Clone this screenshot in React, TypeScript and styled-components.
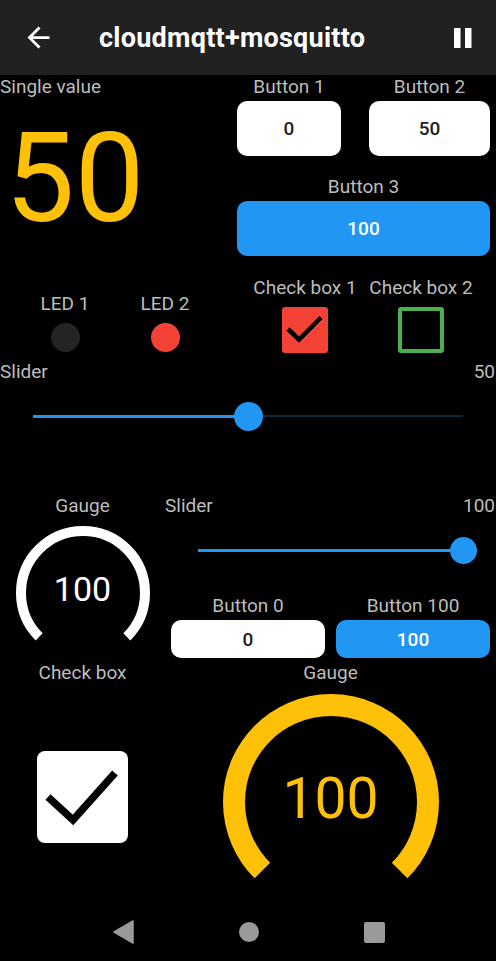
import React from 'react'
import styled, { createGlobalStyle } from 'styled-components'

const GlobalStyle = createGlobalStyle`
  html, body {
    margin: 0;
    padding: 0;
    background: #000;
    font-family: Roboto, "Noto Sans", "Liberation Sans", sans-serif;
  }
  * { box-sizing: border-box; }
`

const BLUE = '#2196F3'
const YELLOW = '#FFC107'
const RED = '#F44336'
const GREEN = '#4CAF50'

export default function App() {
  return <Screen>
    <GlobalStyle />
    <AppBar>
      <BackIcon viewBox="0 0 24 24">
        <path d="M20 11H7.83l5.59-5.59L12 4l-8 8 8 8 1.41-1.41L7.83 13H20v-2z" fill="#fff" />
      </BackIcon>
      <Title>cloudmqtt+mosquitto</Title>
      <PauseIcon viewBox="0 0 18 20">
        <rect x="0" y="0" width="6.5" height="20" fill="#fff" />
        <rect x="11" y="0" width="6.5" height="20" fill="#fff" />
      </PauseIcon>
    </AppBar>

    <Dashboard>
      <TopSection>
        <SingleValue>
          <Label>Single value</Label>
          <BigNumber>50</BigNumber>
        </SingleValue>
        <ButtonGrid>
          <Cell>
            <Label>Button 1</Label>
            <PanelButton $h={55}>0</PanelButton>
          </Cell>
          <Cell>
            <Label>Button 2</Label>
            <PanelButton $h={55}>50</PanelButton>
          </Cell>
          <Cell $wide>
            <Label>Button 3</Label>
            <PanelButton $h={55} $primary>100</PanelButton>
          </Cell>
        </ButtonGrid>
      </TopSection>

      <IndicatorRow>
        <Indicator $w={100} $ml={15}>
          <Label>LED 1</Label>
          <Led $color="#242424" />
        </Indicator>
        <Indicator $w={100}>
          <Label>LED 2</Label>
          <Led $color={RED} />
        </Indicator>
        <Indicator $w={110} $ml={35}>
          <Label>Check box 1</Label>
          <SmallCheck $checked>
            <svg width="46" height="46" viewBox="0 0 46 46">
              <path d="M6 22 L17 32.5 L39 10.5" stroke="#000" strokeWidth="4.5" fill="none" />
            </svg>
          </SmallCheck>
        </Indicator>
        <Indicator $w={110} $ml={6}>
          <Label>Check box 2</Label>
          <SmallCheck />
        </Indicator>
      </IndicatorRow>

      <SliderBlock>
        <SliderHeader>
          <Label>Slider</Label>
          <Label>50</Label>
        </SliderHeader>
        <Slider value={0.5} h={30} thumb={29} />
      </SliderBlock>

      <MiddleRow>
        <GaugeCell>
          <Label>Gauge</Label>
          <Gauge size={134} stroke={10} color="#fff" fontSize={34} valueTop={46} gap={10} />
        </GaugeCell>
        <RightPanel>
          <SliderHeader>
            <Label>Slider</Label>
            <Label>100</Label>
          </SliderHeader>
          <Slider value={1} h={28} thumb={27} top={20} />
          <PairGrid>
            <Cell>
              <Label>Button 0</Label>
              <PanelButton $h={38}>0</PanelButton>
            </Cell>
            <Cell>
              <Label>Button 100</Label>
              <PanelButton $h={38} $primary>100</PanelButton>
            </Cell>
          </PairGrid>
        </RightPanel>
      </MiddleRow>

      <BottomRow>
        <GaugeCell>
          <Label>Check box</Label>
          <BigCheck>
            <svg width="91" height="92" viewBox="0 0 91 92">
              <path d="M11 46 L36 69 L78 22" stroke="#000" strokeWidth="7.5" fill="none" />
            </svg>
          </BigCheck>
        </GaugeCell>
        <GaugeCell>
          <Label>Gauge</Label>
          <Gauge size={216} stroke={22} color={YELLOW} fontSize={57} valueTop={76} gap={11} crop={188} />
        </GaugeCell>
      </BottomRow>
    </Dashboard>

    <NavBar>
      <svg width="21" height="24" viewBox="0 0 21 24">
        <polygon points="20,1 1,12 20,23" fill="#9a9a9a" stroke="#9a9a9a" strokeWidth="1.5" strokeLinejoin="round" />
      </svg>
      <NavHome />
      <NavRecent />
    </NavBar>
  </Screen>
}

interface SliderProps {
  value: number
  h: number
  thumb: number
  top?: number
}
function Slider({ value, h, thumb, top = 19 }: SliderProps) {
  return <SliderTrackArea $h={h} $top={top}>
    <TrackRest />
    <TrackFill style={{ width: `${value * 100}%` }} />
    <Thumb $size={thumb} style={{ left: `${value * 100}%` }} />
  </SliderTrackArea>
}

interface GaugeProps {
  size: number
  stroke: number
  color: string
  fontSize: number
  valueTop: number
  gap: number
  crop?: number
}
function Gauge({ size, stroke, color, fontSize, valueTop, gap, crop }: GaugeProps) {
  const c = size / 2
  const r = (size - stroke) / 2
  const d = r * Math.SQRT1_2
  const path = `M ${c - d} ${c + d} A ${r} ${r} 0 1 1 ${c + d} ${c + d}`
  const h = crop || size
  return <GaugeStack $gap={gap}>
    <svg width={size} height={h} viewBox={`0 0 ${size} ${h}`}>
      <path d={path} stroke={color} strokeWidth={stroke} fill="none" />
    </svg>
    <GaugeValue $color={color} $size={fontSize} $top={valueTop}>100</GaugeValue>
  </GaugeStack>
}

const Screen = styled.div`
  min-height: 961px;
  display: flex;
  flex-direction: column;
  background: #000;
`
const AppBar = styled.header`
  height: 75px;
  flex: none;
  background: #212121;
  display: flex;
  align-items: center;
  padding: 0 24px 0 22px;
`
const BackIcon = styled.svg`
  width: 33px;
  height: 33px;
  flex: none;
`
const Title = styled.h1`
  margin: 0 0 0 44px;
  flex: 1;
  color: #fff;
  font-size: 27px;
  font-weight: 700;
  letter-spacing: 0.25px;
`
const PauseIcon = styled.svg`
  width: 18px;
  height: 20px;
  flex: none;
`
const Dashboard = styled.main`
  display: flex;
  flex-direction: column;
`
const Label = styled.div`
  color: #bdbdbd;
  font-size: 19px;
  line-height: 20px;
  white-space: nowrap;
`
const TopSection = styled.section`
  display: grid;
  grid-template-columns: 237px 253px;
  padding-top: 2px;
`
const SingleValue = styled.div`
  display: flex;
  flex-direction: column;
`
const BigNumber = styled.div`
  margin-top: 20px;
  padding-left: 5px;
  color: ${YELLOW};
  font-size: 124px;
  line-height: 1;
`
const ButtonGrid = styled.div`
  display: grid;
  grid-template-columns: 104px 121px;
  column-gap: 28px;
  row-gap: 21px;
`
const Cell = styled.div<{ $wide?: boolean }>`
  display: flex;
  flex-direction: column;
  align-items: center;
  ${p => p.$wide && 'grid-column: 1 / -1;'}
`
const PanelButton = styled.button<{ $h: number; $primary?: boolean }>`
  margin-top: 4px;
  width: 100%;
  height: ${p => p.$h}px;
  border: none;
  border-radius: 10px;
  background: ${p => p.$primary ? BLUE : '#fff'};
  color: ${p => p.$primary ? '#fff' : '#212121'};
  font-family: inherit;
  font-size: 19px;
  font-weight: 500;
`
const IndicatorRow = styled.section`
  display: flex;
  align-items: flex-end;
  margin-top: 22px;
`
const Indicator = styled.div<{ $w: number; $ml?: number }>`
  width: ${p => p.$w}px;
  margin-left: ${p => p.$ml || 0}px;
  display: flex;
  flex-direction: column;
  align-items: center;
  gap: 9px;
`
const Led = styled.div<{ $color: string }>`
  width: 29px;
  height: 29px;
  margin-bottom: 1px;
  border-radius: 50%;
  background: ${p => p.$color};
`
const SmallCheck = styled.div<{ $checked?: boolean }>`
  width: 46px;
  height: 46px;
  border-radius: 3px;
  background: ${p => p.$checked ? RED : 'transparent'};
  border: ${p => p.$checked ? 'none' : `4px solid ${GREEN}`};
  svg { display: block; }
`
const SliderBlock = styled.section`
  margin-top: 9px;
`
const SliderHeader = styled.div`
  display: flex;
  justify-content: space-between;
  padding-right: 1px;
`
const SliderTrackArea = styled.div<{ $h: number; $top: number }>`
  position: relative;
  height: ${p => p.$h}px;
  margin: ${p => p.$top}px 33px 0 33px;
`
const TrackRest = styled.div`
  position: absolute;
  left: 0;
  right: 0;
  top: 50%;
  height: 2px;
  margin-top: -1px;
  background: #0b2a40;
`
const TrackFill = styled.div`
  position: absolute;
  left: 0;
  top: 50%;
  height: 3px;
  margin-top: -1.5px;
  background: ${BLUE};
`
const Thumb = styled.div<{ $size: number }>`
  position: absolute;
  top: 50%;
  width: ${p => p.$size}px;
  height: ${p => p.$size}px;
  margin: ${p => -p.$size / 2}px 0 0 ${p => -p.$size / 2}px;
  border-radius: 50%;
  background: ${BLUE};
`
const MiddleRow = styled.section`
  display: grid;
  grid-template-columns: 165px 1fr;
  margin-top: 65px;
`
const GaugeCell = styled.div`
  display: flex;
  flex-direction: column;
  align-items: center;
`
const GaugeStack = styled.div<{ $gap: number }>`
  display: grid;
  margin-top: ${p => p.$gap}px;
  & > * { grid-area: 1 / 1; }
  svg { display: block; }
`
const GaugeValue = styled.div<{ $color: string; $size: number; $top: number }>`
  align-self: start;
  justify-self: center;
  margin-top: ${p => p.$top}px;
  color: ${p => p.$color};
  font-size: ${p => p.$size}px;
  line-height: 1;
`
const RightPanel = styled.div`
  display: flex;
  flex-direction: column;
`
const PairGrid = styled.div`
  display: grid;
  grid-template-columns: 1fr 1fr;
  column-gap: 11px;
  padding: 0 6px;
  margin-top: 32px;
`
const BottomRow = styled.section`
  display: grid;
  grid-template-columns: 165px 1fr;
  margin-top: 3px;
`
const BigCheck = styled.div`
  margin-top: 68px;
  width: 91px;
  height: 92px;
  border-radius: 8px;
  background: #fff;
  svg { display: block; }
`
const NavBar = styled.nav`
  margin-top: auto;
  height: 58px;
  display: flex;
  align-items: center;
  justify-content: center;
  gap: 105px;
  padding-left: 2px;
`
const NavHome = styled.div`
  width: 20px;
  height: 20px;
  border-radius: 50%;
  background: #9a9a9a;
`
const NavRecent = styled.div`
  width: 21px;
  height: 21px;
  border-radius: 2px;
  background: #9a9a9a;
`
